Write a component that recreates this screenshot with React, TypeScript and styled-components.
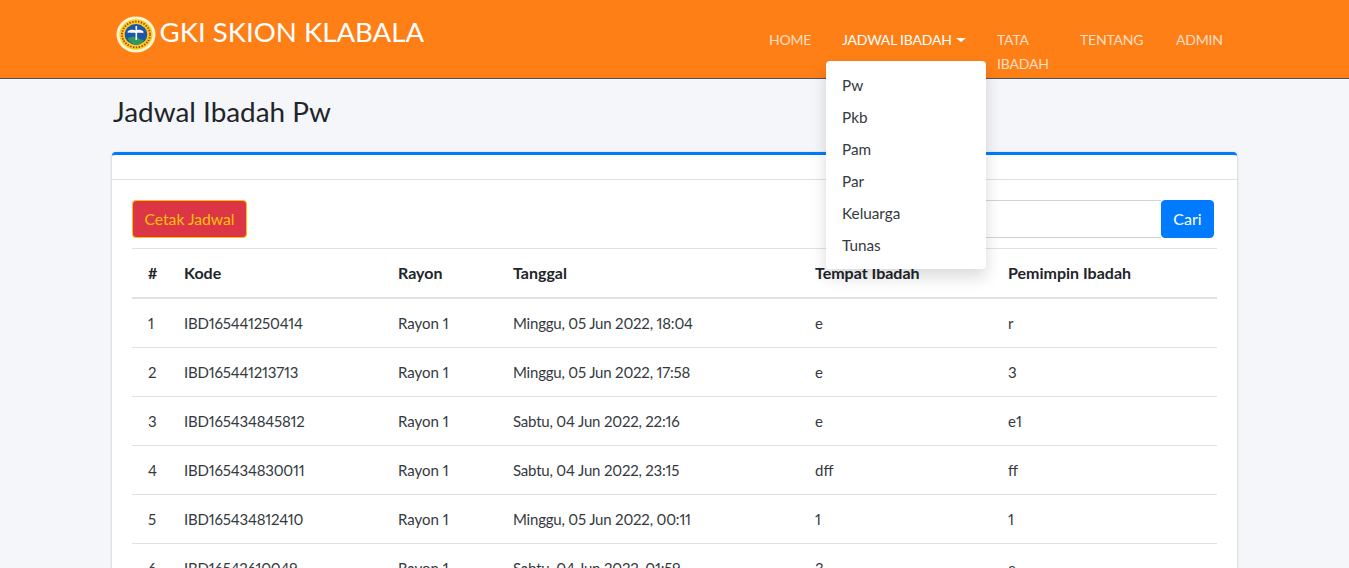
import React from "react";
import styled, { createGlobalStyle } from "styled-components";

const Global = createGlobalStyle`
  html, body { margin: 0; padding: 0; height: 568px; overflow: hidden; }
  body { background: #f4f6f9; color: #212529; font-family: "Lato", "Noto Sans", sans-serif; font-size: 15px; line-height: 24px; }
  * { box-sizing: border-box; }
`;

const Navbar = styled.header`
  background: #ff7f17;
  border-bottom: 1px solid #4b545c;
  height: 79px;
  display: flex;
  justify-content: center;
`;
const NavInner = styled.div`
  width: 1140px;
  padding: 0 7.5px;
  display: flex;
  justify-content: space-between;
  position: relative;
`;
const Brand = styled.a`
  display: flex;
  align-items: flex-start;
  gap: 4px;
  margin: 11px 0 0 3.5px;
  color: #fff;
  font-size: 27.6px;
  line-height: 42px;
  white-space: nowrap;
`;
const LogoSvg = styled.svg`
  margin-top: 5px;
  flex: none;
`;
const NavList = styled.nav`
  display: flex;
  align-items: flex-start;
  padding: 28px 0 0 0;
`;
const NavItem = styled.a<{ $active?: boolean; $w: number }>`
  display: block;
  width: ${(p) => p.$w}px;
  padding: 0 16px;
  font-size: 14px;
  letter-spacing: -0.2px;
  color: ${(p) => (p.$active ? "#fff" : "rgba(255,255,255,.75)")};
  white-space: ${(p) => (p.$active ? "nowrap" : "normal")};
`;
const Caret = styled.span`
  display: inline-block;
  margin-left: 4px;
  vertical-align: 3px;
  border-top: 4.5px solid #fff;
  border-left: 5px solid transparent;
  border-right: 5px solid transparent;
`;
const Menu = styled.div`
  position: absolute;
  left: 721.5px;
  top: 61px;
  width: 160px;
  height: 208px;
  padding: 8px 0;
  background: #fff;
  border-radius: 4px;
  box-shadow: 0 8px 16px rgba(0, 0, 0, .15);
  z-index: 5;
`;
const MenuItem = styled.a`
  display: block;
  height: 32px;
  padding: 4px 16px;
  color: #343a40;
  font-size: 15.3px;
`;
const Main = styled.main`
  width: 1140px;
  margin: 0 auto;
  padding: 0 7.5px;
`;
const Title = styled.h1`
  margin: 0;
  padding: 14px 0 20px 1px;
  height: 73px;
  font-size: 27.9px;
  font-weight: 400;
  line-height: 36px;
`;
const Card = styled.section`
  background: #fff;
  border-top: 3px solid #007bff;
  border-radius: 4px;
  box-shadow: 0 0 1px rgba(0, 0, 0, .125), 0 1px 3px rgba(0, 0, 0, .2);
`;
const CardHeader = styled.div`
  height: 25px;
  border-bottom: 1px solid rgba(0, 0, 0, .125);
`;
const CardBody = styled.div`
  padding: 20px;
`;
const Toolbar = styled.div`
  display: flex;
  justify-content: space-between;
  align-items: flex-start;
  height: 48px;
`;
const PrintButton = styled.button`
  height: 38px;
  width: 115px;
  padding: 0;
  border: 1px solid #ffc107;
  border-radius: 4px;
  background: #dc3545;
  color: #ffc107;
  font: inherit;
  font-size: 15.7px;
`;
const Search = styled.form`
  display: flex;
  margin-right: 3px;
`;
const SearchInput = styled.input`
  width: 280px;
  height: 38px;
  border: 1px solid #ced4da;
  border-right: 0;
  background: #fff;
  border-radius: 4px 0 0 4px;
`;
const SearchButton = styled.button`
  width: 53px;
  height: 38px;
  border: 1px solid #007bff;
  border-radius: 4px;
  background: #007bff;
  color: #fff;
  font: inherit;
  font-size: 16px;
`;
const Table = styled.table`
  width: 100%;
  border-collapse: collapse;
  table-layout: fixed;
`;
const Th = styled.th<{ $w: number }>`
  width: ${(p) => p.$w}px;
  height: 49px;
  padding: 0 0 0 ${(p) => (p.$w === 52 ? 16 : 0)}px;
  text-align: left;
  font-size: 16px;
  font-weight: 700;
  border-top: 1px solid #dee2e6;
  border-bottom: 2px solid #dee2e6;
`;
const Row = styled.tr`
  &:first-child td { height: 50px; padding-top: 1px; }
`;
const Td = styled.td<{ $first?: boolean; $tight?: boolean }>`
  height: 49px;
  padding: 0 0 0 ${(p) => (p.$first ? 16 : 0)}px;
  border-bottom: 1px solid #dee2e6;
  color: #343a40;
  white-space: nowrap;
  font-variant-numeric: proportional-nums;
  letter-spacing: ${(p) => (p.$tight ? "-0.2px" : "0")};
`;
const Logo = () => (
  <LogoSvg width="40" height="37" viewBox="0 0 41 41" preserveAspectRatio="none" aria-hidden="true">
    <circle cx="20.5" cy="20.5" r="20" fill="#fff6cf" />
    <circle cx="20.5" cy="20.5" r="17" fill="#f6cf1e" />
    <circle cx="20.5" cy="20.5" r="11.5" fill="#1f55a8" />
    <path d="M12 25c4-3 9-2 12 0s4 2 5 1c-2 4-5 6-8 6-4 0-7-3-9-7z" fill="#2e9a5a" />
    <path d="M20 11h1.6v6h6v1.5h-6v8H20v-8h-6V17h6z" fill="#fff" />
    <path d="M12 17c3-2 6-2 8-1 2-1 5-1 8 1v2c-3-2-6-2-8-1-2-1-5-1-8 1z" fill="#fff" />
    <circle cx="20.5" cy="20.5" r="14.3" fill="none" stroke="#b5341f" strokeWidth="2" strokeDasharray="1.5 1.5" />
  </LogoSvg>
);

const rows = [
  ["1", "IBD165441250414", "Rayon 1", "Minggu, 05 Jun 2022, 18:04", "e", "r"],
  ["2", "IBD165441213713", "Rayon 1", "Minggu, 05 Jun 2022, 17:58", "e", "3"],
  ["3", "IBD165434845812", "Rayon 1", "Sabtu, 04 Jun 2022, 22:16", "e", "e1"],
  ["4", "IBD165434830011", "Rayon 1", "Sabtu, 04 Jun 2022, 23:15", "dff", "ff"],
  ["5", "IBD165434812410", "Rayon 1", "Minggu, 05 Jun 2022, 00:11", "1", "1"],
  ["6", "IBD16542610049", "Rayon 1", "Sabtu, 04 Jun 2022, 01:59", "3", "e"],
];
const headers: [string, number][] = [["#", 52], ["Kode", 214], ["Rayon", 115], ["Tanggal", 302], ["Tempat Ibadah", 193], ["Pemimpin Ibadah", 209]];

export default function App() {
  return (
    <>
      <Global />
      <Navbar>
        <NavInner>
          <Brand><Logo />GKI SKION KLABALA</Brand>
          <NavList>
            <NavItem $w={73}>HOME</NavItem>
            <NavItem $w={155} $active>JADWAL IBADAH<Caret /></NavItem>
            <NavItem $w={83}>TATA IBADAH</NavItem>
            <NavItem $w={96}>TENTANG</NavItem>
            <NavItem $w={77}>ADMIN</NavItem>
          </NavList>
          <Menu>
            {["Pw", "Pkb", "Pam", "Par", "Keluarga", "Tunas"].map((m) => <MenuItem key={m}>{m}</MenuItem>)}
          </Menu>
        </NavInner>
      </Navbar>
      <Main>
        <Title>Jadwal Ibadah Pw</Title>
        <Card>
          <CardHeader />
          <CardBody>
            <Toolbar>
              <PrintButton>Cetak Jadwal</PrintButton>
              <Search>
                <SearchInput />
                <SearchButton type="button">Cari</SearchButton>
              </Search>
            </Toolbar>
            <Table>
              <thead><tr>{headers.map(([h, w]) => <Th key={h} $w={w}>{h}</Th>)}</tr></thead>
              <tbody>
                {rows.map((r) => <Row key={r[0]}>{r.map((c, i) => <Td key={i} $first={i === 0} $tight={i === 1 || i === 3}>{c}</Td>)}</Row>)}
              </tbody>
            </Table>
          </CardBody>
        </Card>
      </Main>
    </>
  );
}
